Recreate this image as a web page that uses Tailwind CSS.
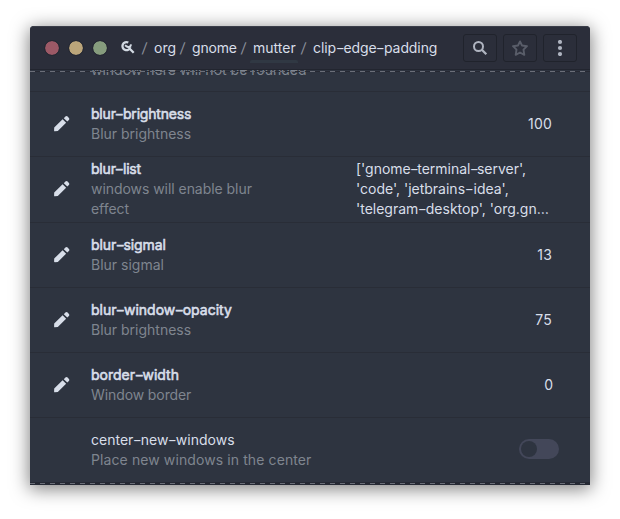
<!DOCTYPE html>
<html lang="en">
<head>
<meta charset="utf-8">
<title>dconf editor</title>
<script src="https://cdn.jsdelivr.net/npm/@tailwindcss/browser@4"></script>
</head>
<body class="bg-white w-[620px] h-[519px] overflow-hidden pt-[26px] px-[30px] font-['Inter','Noto_Sans',sans-serif] text-[14px] leading-5 text-[#d8dee9]">
<svg class="hidden">
  <symbol id="pencil" viewBox="0 0 18 18"><path d="M1.200 13.200 9.600 4.900 13.100 8.300 4.800 16.600 1.900 16.900Q1 16.900 1.100 16ZM10.800 3.800 12.400 2.200Q13.500 1.200 14.600 2.200L15.900 3.500Q16.900 4.500 15.900 5.600L14.300 7.200Z" transform="translate(0 -.6)"/></symbol>
</svg>
<main class="w-[560px] h-[459px] rounded-t-[4px] bg-[#2e3440] shadow-[0_3px_18px_1px_rgba(0,0,0,0.5)]">
  <header class="h-[44px] rounded-t-[4px] bg-[#2b2e3a] border-t border-t-[#3b3e49] border-b border-b-[#22252f] flex items-center pl-[15px] pr-[13px]">
    <div class="flex gap-[10px]">
      <span class="size-[14px] rounded-full bg-[#9c5966] outline outline-[#252832]"></span>
      <span class="size-[14px] rounded-full bg-[#bba57a] outline outline-[#252832]"></span>
      <span class="size-[14px] rounded-full bg-[#869c7d] outline outline-[#252832]"></span>
    </div>
    <svg class="ml-[13px] size-[16px] shrink-0" viewBox="0 0 16 16" fill="none" stroke="#d3dae3"><path d="M8.300 2.600A4 4 0 1 0 10.300 7.200M9.500 8.500 13.700 12.800" stroke-width="2.300"/><path d="M5 5.200 7.300 6.800Q10.600 7.600 11 4.300" stroke-width="2"/></svg>
    <nav class="ml-[6px] flex items-center whitespace-nowrap relative">
      <span class="w-[12px] text-[#8b909b]"><i class="inline-block not-italic -skew-x-6">/</i></span><span class="w-[26px]">org</span>
      <span class="w-[12px] text-[#8b909b]"><i class="inline-block not-italic -skew-x-6">/</i></span><span class="w-[49px] tracking-[-0.2px]">gnome</span>
      <span class="w-[12px] text-[#8b909b]"><i class="inline-block not-italic -skew-x-6">/</i></span><span class="w-[48px]">mutter</span>
      <span class="w-[12px] text-[#8b909b]"><i class="inline-block not-italic -skew-x-6">/</i></span><span class="tracking-[-0.08px]">clip<i class="inline-block not-italic scale-x-140 mx-[.5px]">-</i>edge<i class="inline-block not-italic scale-x-140 mx-[.5px]">-</i>padding</span>
      <i class="absolute left-[108px] top-[22px] w-[48px] h-[3px] rounded-t-[2px] bg-[#303843]"></i>
    </nav>
    <div class="ml-auto flex gap-[6px]">
      <button class="w-[34px] h-[28px] rounded-[3px] border border-[#20232c] flex items-center justify-center"><svg class="size-[16px]" viewBox="0 0 16 16" fill="none" stroke="#afb4c0" stroke-width="2"><circle cx="6.500" cy="6.500" r="4.500"/><path d="M9.800 9.800 14.300 14.300" stroke-width="2.300"/></svg></button>
      <button class="w-[34px] h-[28px] rounded-[3px] border border-[#20232c] flex items-center justify-center"><svg class="size-[16px]" viewBox="0 0 16 16" fill="none" stroke="#595d69" stroke-width="1.900" stroke-linejoin="round"><path d="M8 1.400 10 5.500 15 6.200 11.500 9.700 12.300 14.800 8 12.500 3.700 14.800 4.500 9.700 1 6.200 6 5.500Z"/></svg></button>
      <button class="w-[34px] h-[28px] rounded-[3px] border border-[#20232c] flex items-center justify-center"><svg class="size-[16px]" viewBox="0 0 16 16" fill="#afb4c0"><circle cx="8" cy="2" r="2.100"/><circle cx="8" cy="8" r="2.100"/><circle cx="8" cy="14" r="2.100"/></svg></button>
    </div>
  </header>
  <section class="relative h-[415px] overflow-hidden flex flex-col">
    <div class="h-[22px] shrink-0 border-b border-[#292d37] pl-[61px] flex items-end pb-[11px] text-[#7f858f]"><span class="whitespace-nowrap">window here will not be rounded</span></div>
    <div class="h-[65px] shrink-0 border-b border-[#292d37] flex items-center pl-[23px] pr-[38px]">
      <svg class="size-[18px] mr-[20px]" fill="#d8dee9"><use href="#pencil"/></svg>
      <div class="grow"><p class="[-webkit-text-stroke:0.6px] tracking-[-0.2px]">blur<i class="inline-block not-italic scale-x-140 mx-[.5px]">-</i>brightness</p><p class="text-[#7f858f]">Blur brightness</p></div><span class="tracking-[.2px]">100</span>
    </div>
    <div class="h-[66px] shrink-0 border-b border-[#292d37] flex items-center pl-[23px] pr-[37px] pb-px">
      <svg class="size-[18px] mr-[20px]" fill="#d8dee9"><use href="#pencil"/></svg>
      <div class="grow"><p class="[-webkit-text-stroke:0.6px] tracking-[-0.2px]">blur<i class="inline-block not-italic scale-x-140 mx-[.5px]">-</i>list</p><p class="text-[#7f858f] tracking-[-0.05px]">windows will enable blur<br>effect</p></div>
      <div class="w-[197px] whitespace-nowrap">['gnome<i class="inline-block not-italic scale-x-140">-</i>terminal<i class="inline-block not-italic scale-x-140">-</i>server',<br>'code', 'jetbrains<i class="inline-block not-italic scale-x-140 mx-px">-</i>idea',<br>'telegram<i class="inline-block not-italic scale-x-140 mx-[.5px]">-</i>desktop', 'org.gn…</div>
    </div>
    <div class="h-[65px] shrink-0 border-b border-[#292d37] flex items-center pl-[23px] pr-[38px]">
      <svg class="size-[18px] mr-[20px]" fill="#d8dee9"><use href="#pencil"/></svg>
      <div class="grow"><p class="[-webkit-text-stroke:0.6px] tracking-[-0.1px]">blur<i class="inline-block not-italic scale-x-140 mx-[.5px]">-</i>sigmal</p><p class="text-[#7f858f]">Blur sigmal</p></div><span class="tracking-[.2px]">13</span>
    </div>
    <div class="h-[65px] shrink-0 border-b border-[#292d37] flex items-center pl-[23px] pr-[38px]">
      <svg class="size-[18px] mr-[20px]" fill="#d8dee9"><use href="#pencil"/></svg>
      <div class="grow"><p class="[-webkit-text-stroke:0.6px]">blur<i class="inline-block not-italic scale-x-140 mx-[.5px]">-</i>window<i class="inline-block not-italic scale-x-140 mx-[.5px]">-</i>opacity</p><p class="text-[#7f858f]">Blur brightness</p></div><span class="tracking-[.2px]">75</span>
    </div>
    <div class="h-[65px] shrink-0 border-b border-[#292d37] flex items-center pl-[23px] pr-[37px]">
      <svg class="size-[18px] mr-[20px]" fill="#d8dee9"><use href="#pencil"/></svg>
      <div class="grow"><p class="[-webkit-text-stroke:0.6px]">border<i class="inline-block not-italic scale-x-140 mx-[.5px]">-</i>width</p><p class="text-[#7f858f] tracking-[-.1px]">Window border</p></div><span>0</span>
    </div>
    <div class="h-[62px] shrink-0 flex items-center pl-[61px] pr-[31px]">
      <div class="grow pt-px"><p>center<i class="inline-block not-italic scale-x-140 mx-[.5px]">-</i>new<i class="inline-block not-italic scale-x-140 mx-[.5px]">-</i>windows</p><p class="text-[#7f858f] tracking-[.1px]">Place new windows in the center</p></div>
      <span class="w-[40px] h-[20px] rounded-full bg-[#434759] flex items-center pl-[2px]"><i class="size-[16px] rounded-full bg-[#2e3440]"></i></span>
    </div>
    <i class="absolute top-[1px] inset-x-0 h-px bg-[repeating-linear-gradient(90deg,#6b6f79_0_5px,#262933_5px_10px)]"></i>
    <i class="absolute bottom-0 inset-x-0 h-[3px] bg-[#262a35]"></i>
    <i class="absolute bottom-[1px] inset-x-0 h-px bg-[repeating-linear-gradient(90deg,#6b6f79_0_5px,#262933_5px_10px)]"></i>
  </section>
</main>
</body>
</html>
